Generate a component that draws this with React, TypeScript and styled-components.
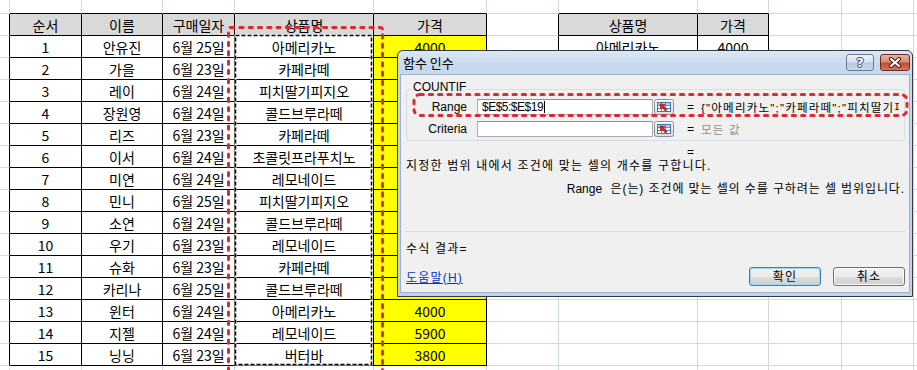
import React from 'react';
import styled, { createGlobalStyle } from 'styled-components';

const GRID = '#d0d7e5';
const INK = '#000';

const COL_WIDTHS = [10, 72, 81, 72, 139, 113, 72, 139, 71, 73, 72, 4];
const ROW_HEIGHTS = [14, ...Array(16).fill(22), 6];

const MENU = [
  { name: '아메리카노', price: 4000 },
  { name: '카페라떼', price: 4500 },
  { name: '피치딸기피지오', price: 5500 },
  { name: '콜드브루라떼', price: 5000 },
  { name: '초콜릿프라푸치노', price: 6000 },
  { name: '레모네이드', price: 5900 },
  { name: '버터바', price: 3800 },
];

const ORDERS: [string, string, string][] = [
  ['안유진', '6월 25일', '아메리카노'],
  ['가을', '6월 23일', '카페라떼'],
  ['레이', '6월 24일', '피치딸기피지오'],
  ['장원영', '6월 24일', '콜드브루라떼'],
  ['리즈', '6월 23일', '카페라떼'],
  ['이서', '6월 24일', '초콜릿프라푸치노'],
  ['미연', '6월 24일', '레모네이드'],
  ['민니', '6월 25일', '피치딸기피지오'],
  ['소연', '6월 24일', '콜드브루라떼'],
  ['우기', '6월 23일', '레모네이드'],
  ['슈화', '6월 23일', '카페라떼'],
  ['카리나', '6월 25일', '콜드브루라떼'],
  ['윈터', '6월 24일', '아메리카노'],
  ['지젤', '6월 24일', '레모네이드'],
  ['닝닝', '6월 23일', '버터바'],
];

const priceOf = (name: string) => String(MENU.find((m) => m.name === name)?.price ?? '');

const inTable = (r: number, c: number) =>
  (r >= 1 && r <= 16 && c >= 1 && c <= 5) || (r >= 1 && r <= 8 && c >= 7 && c <= 8);

type Tone = 'plain' | 'head' | 'price';

function cellAt(r: number, c: number): { text: string; tone: Tone } {
  if (r === 1) {
    const heads: Record<number, string> = { 1: '순서', 2: '이름', 3: '구매일자', 4: '상품명', 5: '가격', 7: '상품명', 8: '가격' };
    return heads[c] ? { text: heads[c], tone: 'head' } : { text: '', tone: 'plain' };
  }
  if (r >= 2 && r <= 16 && c >= 1 && c <= 5) {
    const i = r - 2;
    const [name, date, item] = ORDERS[i];
    const values = [String(i + 1), name, date, item, priceOf(item)];
    return { text: values[c - 1], tone: c === 5 ? 'price' : 'plain' };
  }
  if (r >= 2 && r <= 8 && (c === 7 || c === 8)) {
    const m = MENU[r - 2];
    return { text: c === 7 ? m.name : String(m.price), tone: 'plain' };
  }
  return { text: '', tone: 'plain' };
}

const BG: Record<Tone, string> = { plain: '#fff', head: '#d9d9d9', price: '#ffff00' };

export default function App() {
  const cells = ROW_HEIGHTS.flatMap((_, r) =>
    COL_WIDTHS.map((_, c) => {
      const { text, tone } = cellAt(r, c);
      const right = inTable(r, c) || inTable(r, c + 1) ? INK : GRID;
      const bottom = inTable(r, c) || inTable(r + 1, c) ? INK : GRID;
      return (
        <Cell key={`${r}-${c}`} $right={right} $bottom={bottom} $bg={BG[tone]}>
          {text}
        </Cell>
      );
    })
  );

  return (
    <>
      <GlobalStyle />
      <Page>
        <Sheet>{cells}</Sheet>

        <Dialog>
          <TitleBar>
            <TitleText>함수 인수</TitleText>
            <CaptionButtons>
              <CaptionButton $kind="help">
                <HelpGlyph>?</HelpGlyph>
              </CaptionButton>
              <CaptionButton $kind="close">
                <svg width="14" height="11" viewBox="0 0 14 11">
                  <path d="M3 2 L11 9 M11 2 L3 9" stroke="#4a1c14" strokeWidth="4.2" strokeLinecap="round" />
                  <path d="M3 2 L11 9 M11 2 L3 9" stroke="#fff" strokeWidth="2.2" strokeLinecap="round" />
                </svg>
              </CaptionButton>
            </CaptionButtons>
          </TitleBar>

          <Client>
            <GroupBox>
              <GroupLegend>COUNTIF</GroupLegend>
              <ArgRow>
                <ArgLabel>Range</ArgLabel>
                <ArgInput>
                  $E$5:$E$19
                  <Caret />
                </ArgInput>
                <RefButton />
                <Equals>=</Equals>
                <ArgValue>{'{"아메리카노";"카페라떼";"피치딸기피지오";"콜드브루라떼"}'}</ArgValue>
              </ArgRow>
              <ArgRow>
                <ArgLabel>Criteria</ArgLabel>
                <ArgInput />
                <RefButton />
                <Equals>=</Equals>
                <ArgValue $muted>모든 값</ArgValue>
              </ArgRow>
            </GroupBox>

            <FormulaEquals>=</FormulaEquals>
            <Description>지정한 범위 내에서 조건에 맞는 셀의 개수를 구합니다.</Description>
            <ArgHelp>
              <ArgName>Range</ArgName>
              {'  '}은(는) 조건에 맞는 셀의 수를 구하려는 셀 범위입니다.
            </ArgHelp>
            <Separator />
            <ResultLine>수식 결과=</ResultLine>
            <Footer>
              <HelpLink>도움말(H)</HelpLink>
              <ButtonGroup>
                <PushButton $default>확인</PushButton>
                <PushButton>취소</PushButton>
              </ButtonGroup>
            </Footer>
          </Client>
        </Dialog>

        <Annotations width={917} height={370} viewBox="0 0 917 370">
          <rect x={235.5} y={35.5} width={136} height={329} fill="none" stroke="#fff" strokeWidth={2} />
          <rect x={235.5} y={35.5} width={136} height={329} fill="none" stroke="#000" strokeWidth={1.5} strokeDasharray="4 2" />
          <rect x={228.5} y={27.5} width={154} height={360} rx={2} fill="none" stroke="#dc2a2e" strokeWidth={3} strokeDasharray="3.3 6" strokeLinecap="round" />
          <rect x={414} y={94.5} width={493} height={21} rx={6} fill="none" stroke="#dc2a2e" strokeWidth={3} strokeDasharray="3.3 6" strokeLinecap="round" />
        </Annotations>
      </Page>
    </>
  );
}

function RefButton() {
  return (
    <RefBox>
      <svg width="20" height="16" viewBox="0 0 20 16">
        <defs>
          <linearGradient id="refg" x1="0" y1="0" x2="0" y2="1">
            <stop offset="0" stopColor="#fbfbfb" />
            <stop offset="1" stopColor="#d9dde3" />
          </linearGradient>
        </defs>
        <rect x="0.5" y="0.5" width="19" height="15" rx="2" fill="url(#refg)" stroke="#8b9097" />
        <rect x="3.5" y="3.5" width="13" height="9" fill="#fff" stroke="#3f6fb5" />
        <rect x="4" y="4" width="12" height="2" fill="#b9d0ef" />
        <path d="M4 6.5 H16 M4 9.5 H16 M7.5 4 V12.5 M11.5 4 V12.5" stroke="#5f8ccc" strokeWidth="1" />
        <path d="M6 5 L11 5.6 L9.6 7 L13.2 10.6 L11.6 12.2 L8 8.6 L6.6 10 Z" fill="#e2231a" stroke="#8f1610" strokeWidth="0.6" />
      </svg>
    </RefBox>
  );
}

const GlobalStyle = createGlobalStyle`
  html, body {
    margin: 0;
    padding: 0;
    background: #fff;
  }
  body {
    width: 917px;
    height: 370px;
    overflow: hidden;
    font-family: "Noto Sans CJK KR", sans-serif;
  }
`;

const Page = styled.div`
  position: relative;
  width: 917px;
  height: 370px;
  overflow: hidden;
`;

const Sheet = styled.div`
  display: grid;
  grid-template-columns: ${COL_WIDTHS.map((w) => `${w}px`).join(' ')};
  grid-template-rows: ${ROW_HEIGHTS.map((h) => `${h}px`).join(' ')};
`;

const Cell = styled.div<{ $right: string; $bottom: string; $bg: string }>`
  box-sizing: border-box;
  border-right: 1px solid ${({ $right }) => $right};
  border-bottom: 1px solid ${({ $bottom }) => $bottom};
  background: ${({ $bg }) => $bg};
  display: flex;
  align-items: center;
  justify-content: center;
  font-family: "Noto Sans CJK KR", sans-serif;
  font-size: 14px;
  line-height: 1;
  color: #000;
  white-space: nowrap;
  overflow: hidden;
`;

const Dialog = styled.div`
  position: absolute;
  left: 397px;
  top: 50px;
  width: 516px;
  height: 247px;
  box-sizing: border-box;
  border: 1px solid #2f3b4c;
  border-radius: 6px 6px 0 0;
  background: linear-gradient(to bottom, #dce7f4 0, #c7d9ee 14px, #bed2ea 100%);
  display: flex;
  flex-direction: column;
  font-family: "Liberation Sans", "Noto Sans CJK KR", sans-serif;
  font-size: 12px;
  color: #000;
`;

const TitleBar = styled.div`
  height: 23px;
  display: flex;
  align-items: center;
  padding: 0 2px 0 5px;
`;

const TitleText = styled.span`
  font-family: "Noto Sans CJK KR", sans-serif;
  font-size: 13px;
  line-height: 1;
`;

const CaptionButtons = styled.div`
  margin-left: auto;
  align-self: flex-start;
  margin-top: 3px;
  display: flex;
  gap: 6px;
`;

const CaptionButton = styled.div<{ $kind: 'help' | 'close' }>`
  box-sizing: border-box;
  width: ${({ $kind }) => ($kind === 'help' ? 28 : 30)}px;
  height: 17px;
  border: 1px solid ${({ $kind }) => ($kind === 'help' ? '#6b7a93' : '#6e2a20')};
  border-radius: 3px;
  background: ${({ $kind }) =>
    $kind === 'help'
      ? 'linear-gradient(to bottom, #eef3f9 0, #d6e2f0 45%, #b9cbe2 55%, #c9d8ea 100%)'
      : 'linear-gradient(to bottom, #eab1a4 0, #d98a77 45%, #c54a30 55%, #d5785e 100%)'};
  display: flex;
  align-items: center;
  justify-content: center;
`;

const HelpGlyph = styled.span`
  font-family: "DejaVu Sans", sans-serif;
  font-weight: bold;
  font-size: 13px;
  line-height: 1;
  color: #fff;
  text-shadow: 1px 0 0 #3a4658, -1px 0 0 #3a4658, 0 1px 0 #3a4658, 0 -1px 0 #3a4658;
`;

const Client = styled.div`
  flex: 1;
  margin: 0 2px 3px 2px;
  border: 1px solid #9fb1c7;
  background: #f0f0f0;
  padding: 14px 4px 0 5px;
  display: flex;
  flex-direction: column;
`;

const GroupBox = styled.div`
  position: relative;
  height: 52px;
  box-sizing: border-box;
  border: 1px solid #d5dfe5;
  border-radius: 3px;
  padding: 9px 0 0 0;
  display: flex;
  flex-direction: column;
  gap: 6px;
`;

const GroupLegend = styled.span`
  position: absolute;
  left: 5px;
  top: -10px;
  padding: 0 1px;
  background: #f0f0f0;
  font-size: 12px;
  line-height: 14px;
`;

const ArgRow = styled.div`
  display: flex;
  align-items: center;
  height: 16px;
`;

const ArgLabel = styled.span`
  width: 60px;
  text-align: right;
  margin-right: 10px;
  line-height: 1;
`;

const ArgInput = styled.div`
  box-sizing: border-box;
  width: 176px;
  height: 16px;
  border: 1px solid #abadb3;
  border-top-color: #8e9097;
  background: #fff;
  padding-left: 4px;
  font-family: "Liberation Sans", sans-serif;
  font-size: 12px;
  letter-spacing: -0.5px;
  display: flex;
  align-items: center;
  margin-right: 1px;
`;

const Caret = styled.span`
  width: 1px;
  height: 12px;
  background: #000;
  margin-left: 1px;
`;

const RefBox = styled.div`
  width: 20px;
  height: 16px;
  display: flex;
`;

const Equals = styled.span`
  margin-left: 13px;
  width: 14px;
`;

const ArgValue = styled.span<{ $muted?: boolean }>`
  flex: 1;
  min-width: 0;
  margin-right: 5px;
  overflow: hidden;
  white-space: nowrap;
  font-family: "Liberation Sans", "Noto Sans CJK KR", sans-serif;
  font-size: 11.5px;
  letter-spacing: 1.2px;
  color: ${({ $muted }) => ($muted ? '#8d8d8d' : '#000')};
`;

const FormulaEquals = styled.div`
  height: 14px;
  margin-top: 4px;
  padding-left: 281px;
  line-height: 14px;
`;

const Description = styled.div`
  height: 14px;
  line-height: 14px;
  letter-spacing: 1.2px;
  white-space: nowrap;
`;

const ArgHelp = styled.div`
  margin-top: 9px;
  height: 14px;
  line-height: 14px;
  text-align: right;
  letter-spacing: 0.9px;
  white-space: pre;
`;

const ArgName = styled.span`
  letter-spacing: 0;
`;

const Separator = styled.div`
  margin-top: 35px;
  height: 1px;
  background: #d5dfe5;
`;

const ResultLine = styled.div`
  margin-top: 10px;
  height: 14px;
  line-height: 14px;
  letter-spacing: 1.2px;
`;

const Footer = styled.div`
  margin-top: 10px;
  display: flex;
  align-items: center;
  height: 20px;
`;

const HelpLink = styled.span`
  color: #0033cc;
  text-decoration: underline;
  letter-spacing: 1.2px;
`;

const ButtonGroup = styled.div`
  margin-left: auto;
  display: flex;
  gap: 12px;
`;

const PushButton = styled.div<{ $default?: boolean }>`
  box-sizing: border-box;
  width: 72px;
  height: 19px;
  border: 1px solid ${({ $default }) => ($default ? '#3c7fb1' : '#707070')};
  border-radius: 3px;
  background: linear-gradient(to bottom, #f2f2f2 0, #ebebeb 50%, #dddddd 51%, #cfcfcf 100%);
  box-shadow: ${({ $default }) => ($default ? 'inset 0 0 0 1px #9ed9f6' : 'inset 0 0 0 1px #fcfcfc')};
  display: flex;
  align-items: center;
  justify-content: center;
  font-family: "Noto Sans CJK KR", sans-serif;
  font-size: 12px;
  letter-spacing: 1.2px;
  line-height: 1;
`;

const Annotations = styled.svg`
  position: absolute;
  left: 0;
  top: 0;
  pointer-events: none;
`;
